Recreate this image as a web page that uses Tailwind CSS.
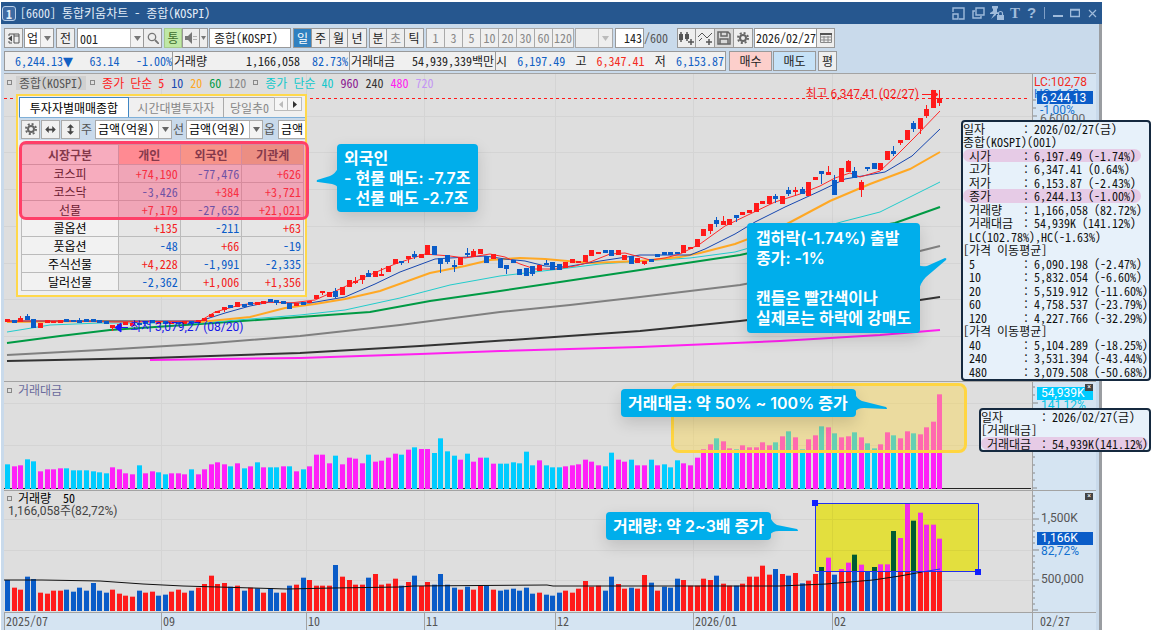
<!DOCTYPE html>
<html lang="ko">

<head>
    <meta charset="UTF-8">
    <meta name="viewport" content="width=device-width, initial-scale=1.0">
    <title>[6600] 통합키움차트 - 종합(KOSPI)</title>
    <script src="https://cdn.jsdelivr.net/npm/@tailwindcss/browser@4"></script>
</head>

<body class="bg-white">
    <main class="relative flex min-h-screen pl-px pt-[2px] pr-[54px] overflow-hidden text-[12px] leading-[14px] text-[#222] font-['Noto_Sans_Mono_CJK_KR','Noto_Sans_CJK_KR',monospace]">
        <div class="flex flex-1 flex-col min-w-0">
            <!-- Title bar -->
            <header class="flex items-center h-[22px] bg-[#26578f] text-[#e3edf8] whitespace-pre pl-px pr-[5px]">
                <span class="w-[14px] h-[15px] mr-1 border border-[#b9cfe8] rounded-[3px] bg-[#3f6ba3] text-center leading-[13px] font-bold">1</span>
                <h1>[6600] 통합키움차트 - 종합(KOSPI)</h1>
                <div class="ml-auto flex items-center text-[#9fbbdb]">
                    <button class="w-[20px]" aria-label="분리"><svg class="w-[13px] h-[13px]" viewBox="0 0 13 13" fill="none" stroke="currentColor" stroke-width="1.4"><path d="M1 5V1h11v11H7M1 7h5v5H1z" /></svg></button>
                    <button class="w-[18px]" aria-label="복제"><svg class="w-[13px] h-[13px]" viewBox="0 0 13 13" fill="none" stroke="currentColor" stroke-width="1.4"><path d="M4 1h8v7H4zM3 4H1v7h8V9" /></svg></button>
                    <button class="w-[17px]" aria-label="고정"><svg class="w-[14px] h-[14px]" viewBox="0 0 14 14" fill="currentColor"><path d="M2 0h6v2L7 3v3l2 1v1H6v1L1 13l3-5H0V7l3-2V3L2 2z" /><path d="M7 9h7v5H7z" /><path d="M8.5 9V7.500a2 2 0 0 1 4 0V9" fill="none" stroke="currentColor" stroke-width="1.2" /></svg></button>
                    <button class="w-[16px] text-[15px] font-['Liberation_Serif',serif] font-bold">T</button>
                    <button class="w-[17px] text-[15px] font-['Liberation_Sans',sans-serif] font-bold">?</button>
                    <span class="w-px h-3 ml-1 mr-2 bg-[#7f9fc6]"></span>
                    <button class="w-[17px]" aria-label="최소화"><svg class="w-[10px] h-[10px]" viewBox="0 0 10 10"><path d="M0 7h10v2H0z" fill="currentColor" /></svg></button>
                    <button class="w-[18px]" aria-label="최대화"><svg class="w-[10px] h-[10px]" viewBox="0 0 10 10"><path d="M.5 1.500h9v7h-9zM0 2h10" fill="none" stroke="currentColor" stroke-width="1.500" /></svg></button>
                    <button aria-label="닫기"><svg class="w-[9px] h-[9px]" viewBox="0 0 9 9"><path d="M1 1l7 7M8 1L1 8" stroke="currentColor" stroke-width="1.200" /></svg></button>
                </div>
            </header>

            <div class="flex flex-1 flex-col bg-[#c9daeb] border-r-[3px] border-[#9a9da1] pl-[3px] pr-[3px] pt-1">
                <!-- Toolbar -->
                <div class="flex h-5 whitespace-nowrap">
                    <button class="w-[19px] border border-[#999] bg-[#eee] grid place-items-center" aria-label="목록"><svg class="w-[12px] h-[11px]" viewBox="0 0 12 11"><path d="M1 1h10v9H6V1M1 1v2M1 8v2h3M6 3h5" fill="none" stroke="#555" /><path d="M0 5.500L4 2.500V8.500z" fill="#444" /></svg></button>
                    <div class="relative w-[30px] ml-px border border-[#999] bg-white">
                        <select aria-label="시장" class="w-full h-full appearance-none pl-[2px] outline-none"><option>업</option></select>
                        <span class="absolute right-0 top-0 w-[13px] h-[18px] border-l border-[#bbb] bg-[#f3f3f3] grid place-items-center pointer-events-none"><svg class="w-[7px] h-[5px]" viewBox="0 0 7 5"><path d="M0 0h7L3.500 5z" fill="#777" /></svg></span>
                    </div>
                    <button class="w-[19px] ml-[2px] border border-[#999] bg-[#eee]">전</button>
                    <div class="relative w-[67px] ml-[2px] border border-[#999] bg-white">
                        <input aria-label="종목코드" class="w-full h-full pl-[2px] outline-none" value="001">
                        <span class="absolute right-0 top-0 w-[13px] h-[18px] border-l border-[#bbb] bg-[#f3f3f3] grid place-items-center pointer-events-none"><svg class="w-[7px] h-[5px]" viewBox="0 0 7 5"><path d="M0 0h7L3.500 5z" fill="#777" /></svg></span>
                    </div>
                    <button class="w-[18px] border border-l-0 border-[#999] bg-[#eee] grid place-items-center" aria-label="검색"><svg class="w-[12px] h-[12px]" viewBox="0 0 12 12" fill="none" stroke="#777" stroke-width="1.300"><circle cx="5" cy="5" r="3.700" /><path d="M8 8l4 4" stroke-width="1.800" /></svg></button>
                    <button class="w-[18px] ml-[2px] border border-[#a5c98c] bg-[#bfe8a5] text-[#3c6b2c]">통</button>
                    <button class="w-[18px] border border-[#999] bg-[#eee] grid place-items-center" aria-label="소리"><svg class="w-[12px] h-[12px]" viewBox="0 0 12 12"><path d="M0 4h3l4-4v12L3 8H0z" fill="#777" /><path d="M9 4v1M9 7v1M11 4v1M11 7v1" stroke="#777" /></svg></button>
                    <button class="w-[8px] border border-l-0 border-[#999] bg-[#eee] grid place-items-center" aria-label="소리 설정"><svg class="w-[5px] h-[4px]" viewBox="0 0 5 4"><path d="M0 0h5L2.500 4z" fill="#777" /></svg></button>
                    <input aria-label="종목명" class="w-[82px] ml-px border border-[#999] bg-white pl-1 outline-none" value="종합(KOSPI)">
                    <div class="flex ml-[2px] border border-[#999] bg-[#eee] divide-x divide-[#999]">
                        <button class="w-[18px] bg-[#2f80c0] text-white">일</button>
                        <button class="w-[18px]">주</button>
                        <button class="w-[18px]">월</button>
                        <button class="w-[18px]">년</button>
                    </div>
                    <div class="flex ml-[2px] border border-[#999] bg-[#eee] divide-x divide-[#999]">
                        <button class="w-[17px]">분</button>
                        <button class="w-[18px] text-[#888]">초</button>
                        <button class="w-[18px]">틱</button>
                    </div>
                    <div class="flex ml-[2px] border border-[#aaa] bg-[#f0f0f0] divide-x divide-[#aaa] text-[#888]">
                        <button class="w-[18px]">1</button>
                        <button class="w-[18px]">3</button>
                        <button class="w-[18px]">5</button>
                        <button class="w-[18px]">10</button>
                        <button class="w-[18px]">20</button>
                        <button class="w-[18px]">30</button>
                        <button class="w-[18px]">60</button>
                        <button class="w-[20px]">120</button>
                    </div>
                    <div class="relative w-[38px] ml-px border border-[#aaa] bg-[#eee]">
                        <select aria-label="주기" class="w-full h-full appearance-none outline-none"><option></option></select>
                        <span class="absolute right-0 top-0 w-[14px] h-[18px] border-l border-[#bbb] grid place-items-center pointer-events-none"><svg class="w-[7px] h-[5px]" viewBox="0 0 7 5"><path d="M0 0h7L3.500 5z" fill="#bbb" /></svg></span>
                    </div>
                    <input id="bar-count" class="w-[29px] ml-[2px] border border-[#999] bg-white pr-px text-right outline-none" value="143">
                    <label for="bar-count" class="w-[33px] leading-5 text-[#555]">/600</label>
                    <div class="flex border border-[#999] bg-[#eee] divide-x divide-[#999]">
                        <button class="w-[18px] grid place-items-center" aria-label="봉 추가"><svg class="w-[15px] h-[15px]" viewBox="0 0 15 15"><path d="M0 3h4v6H0zM6 3h4v5H6z" fill="#555" /><path d="M2 1v10M8 1v9M9 11h6M12 8v6" stroke="#555" stroke-width="1.500" /></svg></button>
                        <button class="w-[19px] grid place-items-center" aria-label="지표 추가"><svg class="w-[15px] h-[15px]" viewBox="0 0 15 15" fill="none" stroke="#555"><path d="M0 6l4-4 5 5 5-5M1 10l3-3" /><path d="M8 11h6M11 8v6" stroke-width="1.500" /></svg></button>
                        <button class="w-[19px] grid place-items-center bg-[#d9d9d9]" aria-label="저장"><svg class="w-[14px] h-[14px]" viewBox="0 0 14 14" fill="none" stroke="#666" stroke-width="1.500"><path d="M1 1h10l2 2v10H1zM4 1v4h6V1M3 13V8h8v5" /></svg></button>
                        <button class="w-[18px] grid place-items-center" aria-label="설정"><svg class="w-[12px] h-[12px]" viewBox="0 0 12 12" fill="none" stroke="#666"><circle cx="6" cy="6" r="3" stroke-width="2" /><circle cx="6" cy="6" r="5" stroke-width="2" stroke-dasharray="2 1.930" /></svg></button>
                    </div>
                    <input aria-label="날짜" class="w-[63px] ml-px border border-[#999] bg-white pl-px outline-none" value="2026/02/27">
                    <button class="w-[18px] border border-l-0 border-[#999] bg-[#eee] grid place-items-center" aria-label="달력"><svg class="w-[12px] h-[10px]" viewBox="0 0 12 10"><path d="M.5 1h11v8.500H.5zM.5 4h11M.5 7h11M4 3v6M8 3v6" fill="none" stroke="#888" /><path d="M0 0h12v2H0z" fill="#555" /></svg></button>
                </div>

                <!-- Quote row -->
                <div class="flex h-5 mt-[3px] mb-[2px] whitespace-pre leading-[18px]">
                    <div class="flex border border-[#999] bg-[#f0f0f0] divide-x divide-[#999]">
                        <p class="w-[168px] flex justify-between pl-[10px] text-[#1160c4]"><span>6,244.13<span class="font-['DejaVu_Sans',sans-serif] text-[13px]">▼</span></span><span>63.14</span><span>-1.00%</span></p>
                        <p class="w-[177px] flex justify-between pl-px pr-px"><span>거래량</span><span class="ml-auto mr-3">1,166,058</span><span class="text-[#1160c4]">82.73%</span></p>
                        <p class="w-[146px] flex justify-between pl-px pr-px"><span>거래대금</span><span>54,939,339백만</span></p>
                        <p class="w-[229px] flex justify-between pr-px"><span>시</span><span class="text-[#1160c4]">6,197.49</span><span>고</span><span class="text-[#f32a20]">6,347.41</span><span>저</span><span class="text-[#1160c4]">6,153.87</span></p>
                    </div>
                    <button class="w-[43px] ml-[3px] border border-[#999] bg-[#fccfcb]">매수</button>
                    <button class="w-[43px] ml-px border border-[#999] bg-[#c6e2f7]">매도</button>
                    <button class="w-[19px] ml-[2px] border border-[#999] bg-[#eee]">평</button>
                </div>

                <!-- Charts -->
                <div class="flex-1 grid grid-cols-[1fr_64px] grid-rows-[308fr_109fr_122fr_18px] bg-[#dedede]">
                    <section class="relative border-t border-[#a3a3a3]">
                        <svg id="price" class="absolute inset-0 w-full h-full" viewBox="4 74 1028 307" preserveAspectRatio="none"></svg>
                        <div class="relative flex items-center h-[17px] gap-[7px] pl-[3px] whitespace-pre">
                            <i class="w-[5px] h-[5px] border border-[#888]"></i>
                            <span class="-ml-[3px] -mr-[3px] px-[3px] bg-[#d0d0d0] text-[#555]">종합(KOSPI)</span>
                            <i class="w-[5px] h-[5px] border border-[#888]"></i>
                            <span class="text-[#ff2020]">종가 단순 5</span>
                            <span class="text-[#1747b0]">10</span>
                            <span class="text-[#ffa824]">20</span>
                            <span class="text-[#009a44]">60</span>
                            <span class="text-[#888]">120</span>
                            <i class="w-[5px] h-[5px] border border-[#888]"></i>
                            <span class="text-[#12c8cc]">종가 단순 40</span>
                            <span class="text-[#8a1690]">960</span>
                            <span class="text-[#333]">240</span>
                            <span class="text-[#ff20f0]">480</span>
                            <span class="text-[#c496f4]">720</span>
                        </div>
                    </section>
                    <aside class="relative border-t border-l border-[#a3a3a3] bg-[#d5e4f2] font-['Roboto','Noto_Sans_CJK_KR',sans-serif] leading-[12px]">
                        <svg class="absolute left-0 top-0 w-[4px] h-full text-[#888]"><path d="M0 26h3M0 34h3M0 42h4" stroke="currentColor" /></svg>
                        <p class="pl-px pt-[2px] text-[#f32a20]">LC:102,78</p>
                        <p class="pl-px h-[3px] text-[#1170d0]">HC:-1,63</p>
                        <p class="relative w-[56px] h-[13px] ml-1 bg-[#0a5cc8] pl-1 leading-[14px] text-white">6,244,13</p>
                        <p class="pl-[7px] h-[8px] text-[#1170d0]">-1,00%</p>
                        <p class="pl-[7px] pt-px text-[#666]">6,600,00</p>
                    </aside>

                    <section class="relative border-t border-[#a3a3a3]">
                        <svg id="value" class="absolute inset-0 w-full h-full" viewBox="4 382 1028 108" preserveAspectRatio="none"></svg>
                        <p class="relative flex items-center pl-[3px] pt-px text-[#6a6a9c]"><i class="w-[5px] h-[5px] mr-[6px] border border-[#888]"></i>거래대금</p>
                    </section>
                    <aside class="relative border-t border-l border-[#a3a3a3] bg-[#d5e4f2] font-['Roboto',sans-serif] leading-[13px]">
                        <svg class="absolute left-0 top-0 w-[6px] h-full text-[#888]"><path d="M0 5h2M0 13h2M0 21h5M0 75h2M0 83h2M0 91h2M0 98h2M0 106h4" stroke="currentColor" /></svg>
                        <button class="absolute z-10 right-[3px] top-[2px] w-2 h-[7px] bg-[#444] text-white text-[7px] leading-[7px]" aria-label="닫기">×</button>
                        <p class="w-[56px] h-[13px] mt-[5px] ml-1 bg-[#00ccff] pl-1 text-white">54,939K</p>
                        <p class="pl-2 h-2 leading-[10px] text-[#00c4e8]">141,12%</p>
                    </aside>

                    <section class="relative border-t border-[#a3a3a3]">
                        <svg id="volume" class="absolute inset-0 w-full h-full" viewBox="4 491 1028 121" preserveAspectRatio="none"></svg>
                        <p class="relative flex items-center pl-[3px] text-black whitespace-pre"><i class="w-[5px] h-[5px] mr-[6px] border border-[#888]"></i>거래량  50</p>
                        <p class="relative pl-1 leading-[13px] font-['Roboto','Noto_Sans_CJK_KR',sans-serif] text-[#444]">1,166,058주(82,72%)</p>
                    </section>
                    <aside class="relative border-t border-l border-[#a3a3a3] bg-[#d5e4f2] font-['Roboto',sans-serif] leading-[13px] text-[#555]">
                        <svg class="absolute left-0 top-0 w-[6px] h-full text-[#888]"><path d="M0 5h2M0 10h2M0 16h2M0 22h2M0 28h6M0 34h2M0 40h2M0 46h2M0 52h2M0 59h6M0 65h2M0 71h2M0 77h2M0 83h2M0 89h6M0 95h2M0 101h2M0 107h2M0 113h2M0 119h5" stroke="currentColor" /></svg>
                        <button class="absolute right-[3px] top-[2px] w-2 h-[7px] bg-[#444] text-white text-[7px] leading-[7px]" aria-label="닫기">×</button>
                        <p class="pl-2 pt-[21px]">1,500K</p>
                        <p class="w-[56px] h-[13px] mt-[7px] ml-1 bg-[#0a5cc8] pl-1 text-white">1,166K</p>
                        <p class="pl-2 text-[#1170d0]">82,72%</p>
                        <p class="pl-2 pt-[15px]">500,000</p>
                    </aside>

                    <!-- Time axis -->
                    <footer id="months" class="relative border-t border-[#a3a3a3] bg-[#d5e4f2] text-[#555] leading-[15px]"></footer>
                    <div class="border-t border-l border-[#a3a3a3] bg-[#d5e4f2] pl-[7px] leading-[15px] text-[#555]">02/27</div>
                </div>
            </div>
        </div>

        <!-- Investor panel -->
        <section class="absolute left-[16px] top-[94px] w-[291px] h-[203px] border-2 border-[#ffd84a] bg-[#f0f0f0] pl-px">
            <nav class="flex h-[22px] pt-px overflow-hidden whitespace-nowrap border-b border-[#7fb0d8] leading-[19px] text-[#888]">
                <button class="w-[110px] shrink-0 bg-white border-x border-t border-[#3f86c4] text-black">투자자별매매종합</button>
                <button class="w-[95px] shrink-0 border-r border-t border-[#aaa]">시간대별투자자</button>
                <button class="w-[50px] shrink-0 pl-[6px] overflow-hidden border-t border-[#aaa] text-left">당일추0</button>
                <button class="w-[14px] h-[14px] border border-[#bbb] bg-[#f6f6f6] grid place-items-center" aria-label="이전"><svg class="w-1 h-[7px]" viewBox="0 0 4 7"><path d="M4 0v7L0 3.500z" fill="#bbb" /></svg></button>
                <button class="w-[14px] h-[14px] border border-l-0 border-[#bbb] bg-[#f6f6f6] grid place-items-center" aria-label="다음"><svg class="w-1 h-[7px]" viewBox="0 0 4 7"><path d="M0 0v7L4 3.500z" fill="#333" /></svg></button>
            </nav>
            <div class="flex items-center h-[22px] pl-[2px] overflow-hidden whitespace-nowrap bg-[#c9daeb] text-[#555]">
                <button class="w-[19px] h-[19px] shrink-0 border border-[#aaa] bg-[#f0f0f0] grid place-items-center" aria-label="설정"><svg class="w-[12px] h-[12px]" viewBox="0 0 12 12" fill="none" stroke="#666"><circle cx="6" cy="6" r="3" stroke-width="2" /><circle cx="6" cy="6" r="5" stroke-width="2" stroke-dasharray="2 1.930" /></svg></button>
                <button class="w-[19px] h-[19px] shrink-0 ml-px border border-[#aaa] bg-[#f0f0f0] grid place-items-center" aria-label="가로"><svg class="w-[11px] h-[7px]" viewBox="0 0 12 8"><path d="M0 4l4-4v3h4V0l4 4-4 4V5H4v3z" fill="#444" /></svg></button>
                <button class="w-[19px] h-[19px] shrink-0 ml-px border border-[#aaa] bg-[#f0f0f0] grid place-items-center" aria-label="세로"><svg class="w-[7px] h-[11px]" viewBox="0 0 8 12"><path d="M4 0l4 4H5v4h3l-4 4-4-4h3V4H0z" fill="#444" /></svg></button>
                <label for="stock-unit" class="w-[15px] shrink-0 pl-px">주</label>
                <div class="relative w-[77px] h-[19px] shrink-0 border border-[#aaa] bg-white text-black">
                    <select id="stock-unit" class="w-full h-full appearance-none pl-[2px] outline-none"><option>금액(억원)</option></select>
                    <span class="absolute right-0 top-0 w-[13px] h-[17px] border-l border-[#bbb] bg-[#f3f3f3] grid place-items-center pointer-events-none"><svg class="w-[7px] h-[5px]" viewBox="0 0 7 5"><path d="M0 0h7L3.500 5z" fill="#666" /></svg></span>
                </div>
                <label for="future-unit" class="w-[14px] shrink-0 pl-px">선</label>
                <div class="relative w-[77px] h-[19px] shrink-0 border border-[#aaa] bg-white text-black">
                    <select id="future-unit" class="w-full h-full appearance-none pl-[2px] outline-none"><option>금액(억원)</option></select>
                    <span class="absolute right-0 top-0 w-[13px] h-[17px] border-l border-[#bbb] bg-[#f3f3f3] grid place-items-center pointer-events-none"><svg class="w-[7px] h-[5px]" viewBox="0 0 7 5"><path d="M0 0h7L3.500 5z" fill="#666" /></svg></span>
                </div>
                <label for="option-unit" class="w-[15px] shrink-0 pl-px">옵</label>
                <select id="option-unit" class="w-[77px] h-[19px] shrink-0 appearance-none border border-[#aaa] bg-white pl-[2px] text-black"><option>금액</option></select>
            </div>
            <table class="w-[283px] ml-[2px] mt-1 table-fixed border-collapse text-center leading-[14px] bg-[#e6e6e6] [&_td]:border [&_td]:border-[#bbb] [&_th]:border [&_th]:border-[#bbb] [&_td]:text-right [&_td]:pr-[2px] [&_tbody_th]:font-normal [&_tbody_th]:bg-[#f2f2f2] [&_tbody_th]:text-black">
                <thead class="bg-[#f2f2f2] text-[#333]">
                    <tr class="h-[20px]">
                        <th class="w-[97px]">시장구분</th>
                        <th class="bg-[#ffb9a8]">개인</th>
                        <th class="bg-[#f4c898]">외국인</th>
                        <th class="bg-[#e0c090]">기관계</th>
                    </tr>
                </thead>
                <tbody id="investors"></tbody>
            </table>
        </section>
        <div class="absolute left-[19px] top-[141px] w-[290px] h-[79px] border-[3px] border-[#ff3f68] rounded-[7px] bg-[#ff4470]/40"></div>

        <!-- Labels of the highest and the lowest price -->
        <p class="absolute right-[237px] top-[87px] font-['Roboto','Noto_Sans_CJK_KR',sans-serif] text-[#f32020]">최고 6,347,41 (02/27)</p>
        <p class="absolute left-[130px] top-[320px] font-['Roboto','Noto_Sans_CJK_KR',sans-serif] text-[#1818e8]">최저 3,079,27 (08/20)</p>

        <!-- Highlight over the trading value bars -->
        <div class="absolute left-[671px] top-[383px] w-[296px] h-[70px] border-[3px] border-[#ffd540] rounded-[8px] bg-[#ffd840]/40"></div>

        <!-- Callouts -->
        <div class="absolute left-[337px] top-[144px] w-[141px] rounded-[4px] bg-[#00aeeb] pl-[7px] py-1 whitespace-pre text-[16px] leading-5 font-semibold text-white font-['Inter','Noto_Sans_CJK_KR',sans-serif] shadow-[0_6px_16px_rgba(0,0,0,0.14)]">외국인
- 현물 매도: -7.7조
- 선물 매도 -2.7조<svg class="absolute -left-[21px] top-[24px] w-[22px] h-5" viewBox="0 0 22 20"><path d="M22 0Q20 5 14 8L1 12Q0 14 2 14L16 16Q21 17 22 20z" fill="#00aeeb" /></svg></div>
        <div class="absolute left-[747px] top-[223px] w-[173px] rounded-[4px] bg-[#00aeeb] pl-[9px] py-[5px] whitespace-pre text-[16px] leading-5 font-semibold text-white font-['Inter','Noto_Sans_CJK_KR',sans-serif] shadow-[0_6px_16px_rgba(0,0,0,0.14)]">갭하락(-1.74%) 출발
종가: -1%

캔들은 빨간색이나
실제로는 하락에 강매도<svg class="absolute -right-[27px] top-[34px] w-[28px] h-[34px]" viewBox="0 0 28 34"><path d="M0 8Q2 10 8 9L26 1Q28 1 27 3L7 20Q1 26 0 34z" fill="#00aeeb" /></svg></div>
        <div class="absolute left-[621px] top-[389px] w-[235px] rounded-[4px] bg-[#00aeeb] pl-[7px] py-1 whitespace-pre text-[16px] leading-5 font-semibold text-white font-['Inter','Noto_Sans_CJK_KR',sans-serif] shadow-[0_6px_16px_rgba(0,0,0,0.14)]">거래대금: 약 50% ~ 100% 증가<svg class="absolute -right-[32px] top-[5px] w-[33px] h-[18px]" viewBox="0 0 33 18"><path d="M0 0Q2 5 7 7L31 13Q33 15 31 15L9 14Q2 14 0 18z" fill="#00aeeb" /></svg></div>
        <div class="absolute left-[606px] top-[512px] w-[165px] rounded-[4px] bg-[#00aeeb] pl-[7px] py-1 whitespace-pre text-[16px] leading-5 font-semibold text-white font-['Inter','Noto_Sans_CJK_KR',sans-serif] shadow-[0_6px_16px_rgba(0,0,0,0.14)]">거래량: 약 2~3배 증가<svg class="absolute -right-[28px] top-[5px] w-[29px] h-[18px]" viewBox="0 0 29 18"><path d="M0 0Q2 5 7 8L27 12Q29 14 27 14L9 14Q2 14 0 18z" fill="#00aeeb" /></svg></div>

        <!-- Data tooltips -->
        <div id="price-tip" class="absolute right-[5px] top-[120px] w-[190px] h-[261px] grid auto-rows-fr border-2 border-[#15293f] rounded-[4px] bg-[#e7f1fa] pb-px leading-[13px] whitespace-pre text-[#111] overflow-hidden"></div>
        <div id="value-tip" class="absolute right-[5px] top-[408px] w-[172px] h-[44px] grid auto-rows-fr border-2 border-[#15293f] rounded-[4px] bg-[#e7f1fa] leading-[13px] whitespace-pre text-[#111] overflow-hidden"></div>
    </main>

    <script>
        const RED = '#ff1a1a';
        const BLUE = '#0a5cc8';
        const FIRST = 7.7;
        const STEP = 6.565;

        // colour, body top, body bottom, high, low
        const candles = `r319,321 b320,322 r318,321,316 b316,319,314 b319,327 r323,327 r320,322 r321,322 r320,322 b319,321
            b320,321 b320,322,318 b319,321 b319,321 b320,322 b321,323 r325,327,325,330 r324,326 r322,324 r323,325
            b323,324 b321,323 b320,322 r322,323 b321,323 r322,323 b322,323 r321,323 b321,323 r320,322
            r318,320 r314,316 r311,312 r307,309,307,311 b305,307 r302,306 b304,306 b302,304 r302,304 r301,303
            b299,301 b300,302,300,304 b301,303 b303,308 r303,305 b302,304 r301,302 r295,298 r291,292,291,294 r292,296
            b291,296,288,297 r287,294 r280,286 r281,282,277,283 r275,279,275,283 b273,276,270 r271,276 r274,275,268 r266,271 r259,263
            b261,262,261,264 r256,258,256,262 b254,256,251,258 r254,257 r245,254 b246,254 b258,263,258,272 b255,261,255,263 b265,266,260,271 r257,264
            b253,254,248,256 r251,256,249 r249,253 b256,262 r254,258 b259,267 b265,268,265,273 b260,262 b269,274 b268,275
            b266,273,266,275 r265,270 b263,264,260 b262,269 b264,269 r262,267 r259,262 r261,262 r255,261 r250,255
            r252,253 b250,252 b250,255 r250,254 r255,259 b256,263 r258,262 r261,263,261,264 b259,261 b254,256
            b252,254 b252,254 b252,253 r245,252 r247,248 r239,246 r229,235 r224,230,224,233 b220,223,217,226 r221,224,216
            r219,224 b215,217,215,221 r212,214 r210,212 r203,211 r201,203 r196,203 b196,198,194,202 r196,203 b190,193,187,195
            r190,191,187,195 b189,193,187 r182,195 r177,179 b171,173,171,183 r172,174,166 b180,194,175 r168,181 r161,171,160 b171,177,167
            r182,189,180,196 b167,168,167,170 b163,168 r163,169 r151,159 b151,153,146,155 r140,142,140,144 r130,139 b123,128,121,131 r118,128,118,133
            r109,115,105,117 r90,107 r98,102,90,105`.trim().split(/\s+/);

        // colour, bar height in thirds of a unit
        const values = `c74 m68 m71 c89 c83 m53 m59 m59 m62 c62 c56 c56 c56 c53 c50 c47 m65 m59 m47 m44 c71 m47 m53 c50 c44 m47 m47 m44 c59 m44
            m59 m74 m80 m74 c68 m77 c62 m68 c80 m65 c65 c65 m68 c68 m53 c59 m68 m103 m103 m77 c100 m74 m94 m91 m77 c103 m82 m85 m94 m106
            c103 m118 c125 m120 m120 c108 c152 c113 c100 m88 c106 m82 m94 c94 m76 c76 c76 c80 c77 c112 c71 m86 c71 c65 c65 m68 m71 m74 m88 m82
            m71 c68 c109 m88 m82 c88 m71 m71 c88 m71 c74 c65 c86 m77 m71 m94 m119 m134 c152 m143 m122 c119 m131 m125 m125 m140 m131 c140 m158 c173
            m155 c119 m149 m161 c188 m185 c167 m155 m158 c170 m155 c137 c122 m134 m170 c161 m152 m173 c167 m164 m185 m202 m284`.trim().split(/\s+/);

        const volumes = `b93 r70 r64 b103 b96 r55 r52 r61 r61 b64 b58 b70 b61 b84 b61 b55 r64 r52 r46 r43 b61 r55 r58 b46 b49 r58 r64 r55 b61 r70
            r81 r106 r81 r84 b73 r76 b61 r70 b68 r55 b68 b55 r55 b76 r79 b100 r93 r76 r76 r76 b138 r103 r93 r79 r79 b100 r111 r79 r82 r97
            b76 r87 b106 r75 r87 b79 b111 b79 b70 r64 b73 r64 r76 b76 r64 b61 b64 b67 b61 b70 b52 r55 b49 b46 b55 r61 r55 r67 r90 r73
            r76 b61 b103 r81 r67 b70 r67 r108 b85 r61 b73 b70 b97 r93 r76 r76 r97 r93 b106 r82 r76 b76 r82 r103 r103 r136 r109 b126 r111 b106
            r114 b83 r91 r111 b132 r160 b109 r126 r145 b169 r139 b117 b132 r140 r140 b240 r219 r321 b271 r295 r259 r259 r217`.trim().split(/\s+/);

        const averages = [
            ['#ff20f0', 2, '150,360 300,358 420,354 500,351 640,347 780,341 880,335 940,330'],
            ['#333', 2, '7,361 150,358 300,353 420,346 540,338 640,331 740,321 880,304 920,300 940,297'],
            ['#808080', 2, '7,355 100,350 200,344 300,336 400,325 500,312 570,305 640,297 740,285 830,268 920,251 940,246'],
            ['#009a44', 2, '7,343 60,336 110,330 200,324 300,317 370,312 430,301 500,291 560,282 620,273 680,264 740,255 850,231 895,223 940,207'],
            ['#22cccc', 1, '7,332 50,325 100,323 200,323 300,315 345,310 400,298 450,285 500,276 560,269 600,264 640,261 690,258 735,252 830,225 845,221 880,212 910,197 940,182'],
            ['#ffa824', 2, '7,322 100,321 200,322 250,317 285,308 315,304 345,299 380,291 430,273 465,266 490,260 520,258 545,259 590,263 640,261 680,257 700,253 735,244 785,225 830,201 870,184 910,169 940,152'],
            ['#1747b0', 1, '7,321 200,321 225,313 250,306 270,302 290,303 310,303 345,297 375,284 400,272 435,259 450,258 485,256 505,259 525,261 545,266 565,267 600,261 640,255 690,255 705,249 735,234 755,222 785,207 820,191 845,179 885,172 912,156 940,129'],
            ['#ff2a2a', 1, '7,321 60,321 115,322 200,321 215,312 240,305 265,302 290,303 315,300 340,289 365,277 395,264 425,254 450,256 465,258 490,254 505,257 520,264 535,269 555,269 575,266 590,262 610,254 625,253 640,257 650,260 665,258 680,254 700,244 725,226 750,214 775,202 800,194 820,186 835,178 850,173 860,177 880,171 895,157 915,137 940,111']
        ];

        const months = [[4, '2025/07'], [161, '09'], [306, '10'], [424, '11'], [555, '12'], [693, '2026/01'], [832, '02']];

        function grid(rows, top, bottom) {
            const v = months.slice(1).map(m => `M${m[0] + 0.5} ${top}V${bottom}`).join('');
            const h = rows.map(y => `M4 ${y + 0.5}H1032`).join('');
            return `<path d="${v}${h}" stroke="#d4d4d4" fill="none"/>`;
        }

        function bars(list, base, colors) {
            return list.map((b, i) => {
                const h = Number(b.slice(1)) / 3;
                const x = Math.round(FIRST + STEP * i - 2.5);
                return `<rect x="${x}" y="${base - h}" width="5" height="${h}" fill="${colors[b[0]]}"/>`;
            }).join('');
        }

        // Price chart
        const sticks = candles.map((c, i) => {
            const [top, bottom, high = top, low = bottom] = c.slice(1).split(',').map(Number);
            const color = c[0] === 'r' ? RED : BLUE;
            const x = Math.round(FIRST + STEP * i - 2.5);
            return `<rect x="${x}" y="${top}" width="5" height="${bottom - top + 1}" fill="${color}"/>
                <rect x="${x + 2}" y="${high}" width="1" height="${low - high + 1}" fill="${color}"/>`;
        }).join('');
        document.getElementById('price').innerHTML = grid([116, 152, 189, 226, 263, 299, 336], 74, 381)
            + `<path d="M4 98.500H1028" stroke="${RED}" stroke-dasharray="3 3"/>`
            + averages.map(a => `<polyline points="${a[2]}" fill="none" stroke="${a[0]}" stroke-width="${a[1]}"/>`).join('')
            + sticks
            + `<path d="M922 94.500h10M932 90l6 4.500-6 4.500z" stroke="${RED}" fill="${RED}"/>
               <path d="M128 327.500h-8M121 323l-6 4.500 6 4.500z" stroke="#1818ff" fill="#1818ff"/>`;

        // Trading value
        document.getElementById('value').innerHTML = grid([403, 445], 382, 490)
            + '<path d="M4 488.500H1031" stroke="#222"/>'
            + bars(values, 489, { c: '#00ccff', m: '#ff20f8' });

        // Volume with its selected area
        document.getElementById('volume').innerHTML = grid([519, 550, 580], 491, 612)
            + bars(volumes, 611, { r: RED, b: BLUE })
            + '<clipPath id="picked"><path d="M815 503h163v69H815z"/></clipPath><g clip-path="url(#picked)">'
            + '<path d="M815 503h163v69H815z" fill="#e3df3e"/><path d="M832.500 503v69M815 519.500h163M815 550.500h163" stroke="#d8d43a"/>'
            + bars(volumes, 611, { r: '#f32be8', b: '#005a32' }) + '</g>'
            + `<polyline points="4,580 42,580 100,581 143,584 183,586 253,588 287,589 333,588 400,587 413,586 547,585 553,586 780,586 826,584 873,580 900,576 922,572" fill="none" stroke="#111"/>
               <polyline points="922,572 940,569" fill="none" stroke="#2030f0"/>
               <path d="M815.500 503.500h163v68h-163z" fill="none" stroke="#2030f0"/>
               <path d="M812 500h6v6h-6zM975 569h6v6h-6z" fill="#1020ff"/>`;

        // Time axis labels
        document.getElementById('months').innerHTML = months.map(m =>
            `<span class="absolute top-0 h-full border-l border-[#a3a3a3] pl-px" style="left:${(m[0] - 4) / 1028 * 100}%">${m[1]}</span>`).join('');

        // Investor table
        const investors = [
            ['코스피', '+74,190', '-77,476', '+626'],
            ['코스닥', '-3,426', '+384', '+3,721'],
            ['선물', '+7,179', '-27,652', '+21,021'],
            ['콜옵션', '+135', '-211', '+63'],
            ['풋옵션', '-48', '+66', '-19'],
            ['주식선물', '+4,228', '-1,991', '-2,335'],
            ['달러선물', '-2,362', '+1,006', '+1,356']
        ];
        document.getElementById('investors').innerHTML = investors.map(([name, ...cells]) =>
            `<tr class="h-[18px]"><th scope="row">${name}</th>${cells.map(c =>
                `<td class="${c[0] === '+' ? 'text-[#f32020]' : 'text-[#0a5cc8]'}">${c}</td>`).join('')}</tr>`).join('');

        // Tooltips, a leading * marks a highlighted row
        function tip(id, rows) {
            document.getElementById(id).innerHTML = rows.map(([name, value]) => {
                const marked = name[0] === '*';
                const label = marked ? name.slice(1) : name;
                return `<p class="flex ${marked ? 'bg-[#e6cbe6] rounded-full mr-2' : ''}"><span class="w-[60px]">${label}</span>${value ? `<span class="w-[11px]">:</span><span>${value}</span>` : ''}</p>`;
            }).join('');
        }
        tip('price-tip', [
            ['일자', '2026/02/27(금)'],
            ['종합(KOSPI)(001)'],
            ['* 시가', '6,197.49 (-1.74%)'],
            [' 고가', '6,347.41 (0.64%)'],
            [' 저가', '6,153.87 (-2.43%)'],
            ['* 종가', '6,244.13 (-1.00%)'],
            [' 거래량', '1,166,058 (82.72%)'],
            [' 거래대금', '54,939K (141.12%)'],
            [' LC(102.78%),HC(-1.63%)'],
            ['[가격 이동평균]'],
            [' 5', '6,090.198 (-2.47%)'],
            [' 10', '5,832.054 (-6.60%)'],
            [' 20', '5,519.912 (-11.60%)'],
            [' 60', '4,758.537 (-23.79%)'],
            [' 120', '4,227.766 (-32.29%)'],
            ['[가격 이동평균]'],
            [' 40', '5,104.289 (-18.25%)'],
            [' 240', '3,531.394 (-43.44%)'],
            [' 480', '3,079.508 (-50.68%)']
        ]);
        tip('value-tip', [
            ['일자', '2026/02/27(금)'],
            ['[거래대금]'],
            ['* 거래대금', '54,939K(141.12%)']
        ]);
    </script>
</body>

</html>
